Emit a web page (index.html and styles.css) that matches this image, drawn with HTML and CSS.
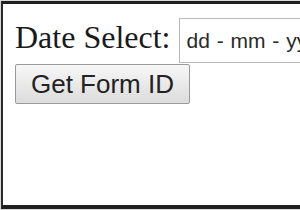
FILE: index.html
```html
<!DOCTYPE html>
<html>
<head>
    <meta charset="UTF-8">
    <link rel="stylesheet" href="styles.css">
</head>
<body>
    <div class="frame">
        <div class="date-row">
            <label class="date-label" for="dateSelect">Date Select:</label>
            <div class="date-box" id="dateSelect">dd - mm - yyyy</div>
        </div>
        <button class="get-id-btn" id="getFormId">Get Form ID</button>
    </div>
</body>
</html>
```

FILE: styles.css
```css
html, body {
    margin: 0;
    padding: 0;
    background: #d8d8d8;
    overflow: hidden;
}
.frame {
    width: 299px;
    height: 208px;
    margin: 1px 0 0 1px;
    box-sizing: border-box;
    background: #fff;
    border-top: 3px solid #1f1f1f;
    border-left: 2px solid #2a2a2a;
    border-bottom: 4px solid #1f1f1f;
    padding: 14px 0 0 12px;
    overflow: hidden;
    white-space: nowrap;
}
.date-row {
    display: flex;
    align-items: baseline;
}
.date-label {
    font-family: "Liberation Serif", "Times New Roman", serif;
    font-size: 32px;
    color: #1a1a1a;
    margin-right: 9px;
}
.date-box {
    flex: none;
    width: 160px;
    height: 45px;
    line-height: 43px;
    box-sizing: border-box;
    border: 1px solid #b8b8b8;
    padding-left: 6px;
    font-family: "Liberation Sans", Arial, sans-serif;
    font-size: 21px;
    word-spacing: 1px;
    color: #2a2a2a;
    background: #fff;
}
.get-id-btn {
    display: block;
    width: 175px;
    height: 40px;
    margin-top: 1px;
    padding: 0;
    border: 1px solid #9a9a9a;
    border-radius: 2px;
    background: linear-gradient(#f7f7f7, #dcdcdc);
    font-family: "Liberation Sans", Arial, sans-serif;
    font-size: 26px;
    color: #222;
}
```
